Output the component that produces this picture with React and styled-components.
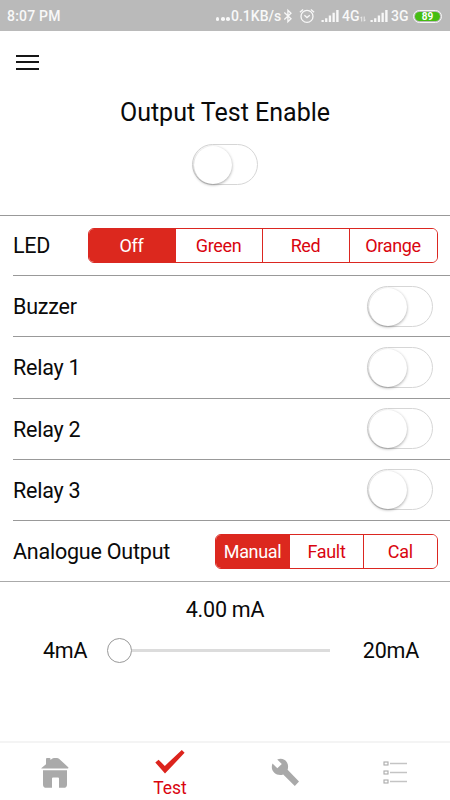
import { useState } from "react"
import styled, { createGlobalStyle } from "styled-components"

const RELAYS = ["Relay 1", "Relay 2", "Relay 3"]

export default function App(){
    const [enabled, setEnabled] = useState(false)
    const [led, setLed] = useState("Off")
    const [outputs, setOutputs] = useState({})
    const [mode, setMode] = useState("Manual")

    function toggleOutput(name){
        setOutputs({...outputs, [name]: !outputs[name]})
    }

    return(
        <>
            <GlobalStyle />
            <Screen>
                <StatusBar />
                <Header>
                    <MenuButton aria-label="Menu"><i /><i /><i /></MenuButton>
                </Header>
                <EnableArea>
                    <Title>Output Test Enable</Title>
                    <Toggle on={enabled} onClick={() => setEnabled(!enabled)} />
                </EnableArea>
                <Rows>
                    <Row $height="60px">
                        <Label>LED</Label>
                        <Segments options={["Off", "Green", "Red", "Orange"]} columns="86px 87px 87px 1fr" width="350px" value={led} onChange={setLed} />
                    </Row>
                    {["Buzzer", ...RELAYS].map((name) => (
                        <Row key={name} $height="61.25px" $toggle>
                            <Label $drop>{name}</Label>
                            <Toggle on={outputs[name]} onClick={() => toggleOutput(name)} />
                        </Row>
                    ))}
                    <Row $height="60px" $last>
                        <Label $drop>Analogue Output</Label>
                        <Segments options={["Manual", "Fault", "Cal"]} columns="73px 74px 1fr" width="222.5px" value={mode} onChange={setMode} />
                    </Row>
                </Rows>
                <Reading>4.00 mA</Reading>
                <SliderRow>
                    <Label>4mA</Label>
                    <Slider><Thumb /><Track /></Slider>
                    <Label>20mA</Label>
                </SliderRow>
                <TabBar>
                    <Tab aria-label="Home"><HomeIcon /></Tab>
                    <Tab $active><TickIcon />Test</Tab>
                    <Tab aria-label="Settings"><WrenchIcon /></Tab>
                    <Tab aria-label="List"><ListIcon /></Tab>
                </TabBar>
            </Screen>
        </>
    )
}

function StatusBar(){
    return(
        <Status>
            <Clock>8:07 PM</Clock>
            <Dots><i /><i /><i /></Dots>
            <Speed>0.1KB/s</Speed>
            <BluetoothIcon />
            <AlarmIcon />
            <SignalIcon />
            <Network>4G</Network>
            <DataIcon />
            <SignalIcon $near />
            <Network>3G</Network>
            <Battery><span>89</span></Battery>
        </Status>
    )
}

function Toggle({ on, onClick }){
    return(
        <Switch role="switch" aria-checked={!!on} $on={on} onClick={onClick}>
            <Knob $on={on} />
        </Switch>
    )
}

function Segments({ options, columns, width, value, onChange }){
    return(
        <SegmentGroup $columns={columns} $width={width}>
            {options.map((option) => (
                <Segment key={option} $active={option === value} onClick={() => onChange(option)}>
                    {option}
                </Segment>
            ))}
        </SegmentGroup>
    )
}

function BluetoothIcon(){
    return(
        <StatusIcon $left="3px" width="10" height="16" viewBox="0 0 10 16" fill="none" stroke="#f8f8f8" strokeWidth="1.3">
            <path d="M1.3 4.6 8 10.8 4.9 13.8V2.2L8 5.2 1.3 11.4" />
        </StatusIcon>
    )
}

function AlarmIcon(){
    return(
        <StatusIcon $left="6px" width="16" height="16" viewBox="0 0 16 16" fill="none" stroke="#f8f8f8" strokeWidth="1.3">
            <circle cx="8" cy="8.4" r="6" />
            <path d="M5.4 7.3 8 9.6 10.8 7.3M.9 4.3 4.1 1.5M15.1 4.3 11.9 1.5" />
        </StatusIcon>
    )
}

function SignalIcon({ $near }){
    return(
        <StatusIcon $left={$near ? "4px" : "6px"} width="18" height="14" viewBox="0 0 18 14" fill="#f8f8f8">
            <path d="M.5 11h2.3v2H.5zM4.1 9.3h2.3V13H4.1zM7.8 6.6h2.3V13H7.8zM11.5 3.8h2.3V13h-2.3zM15.2 1h2.4v12h-2.4z" />
        </StatusIcon>
    )
}

function DataIcon(){
    return(
        <StatusIcon $left="0" $top="6px" width="6" height="6" viewBox="0 0 6 6" fill="none" stroke="#f0f0f0" strokeWidth=".9">
            <path d="M1.7 5.5V.8L.3 2.3M4.2.5v4.7l1.4-1.5" />
        </StatusIcon>
    )
}

function HomeIcon(){
    return(
        <svg width="28" height="31" viewBox="0 0 28 31" fill="#aaa">
            <path d="M.2 11.2 5 7.2V2q0-1 1-1h2.5q1 0 1 1v1L11 1.7q1-.8 2-.8h3q1 0 2 .8l9.5 8.8-.4.9H.7z" />
            <path d="M2 13.2h24v14.2q0 3.4-3.4 3.4H18v-9.2q0-1-1-1h-5q-1 0-1 1v9.2H5.4Q2 30.8 2 27.4z" />
        </svg>
    )
}

function TickIcon(){
    return(
        <svg width="30" height="24" viewBox="0 0 30 24" fill="#dc241d">
            <path d="m.3 12.4 3.3-2.7 6.2 6.2L26.8.1l2.8 2.7L10 23.6z" />
        </svg>
    )
}

function WrenchIcon(){
    return(
        <svg width="29" height="29" viewBox="0 0 29 29" fill="#a9a9a9">
            <path d="M6.2 1.5C10-.2 14 1 16 4.4c1.4 2.4 1.3 5 .6 7.4L28 23.6 23.8 28 12.2 16.4C6.7 18.3.8 14.6.8 8.9c0-1.2.2-2.2.7-3.4l4.8 4.7L10.8 6z" />
        </svg>
    )
}

function ListIcon(){
    return(
        <svg width="25" height="24" viewBox="0 0 25 24" fill="none">
            {[3.5, 12.5, 21.5].map((y) => (
                <g key={y}>
                    <rect x="1" y={y - 1.5} width="4" height="3" stroke="#aaa" strokeWidth="1.1" />
                    <path d={`M7 ${y}H24`} stroke="#c4c4c4" strokeWidth="1.5" />
                </g>
            ))}
        </svg>
    )
}


const GlobalStyle = createGlobalStyle`
    *{
        box-sizing: border-box;
    }

    body{
        margin: 0;
        background-color: #FFFFFF;
        font-family: Roboto, sans-serif;
    }

    button{
        margin: 0;
        padding: 0;
        border: 0;
        background: none;
        color: inherit;
        font-family: inherit;
    }

    svg{
        display: block;
        flex-shrink: 0;
    }
`

const Screen = styled.div`
    display: flex;
    flex-direction: column;
    width: 450px;
    height: 800px;
    overflow: hidden;
    background-color: #FFFFFF;
    color: #0a0a0a;
`

const Status = styled.div`
    display: flex;
    align-items: center;
    flex-shrink: 0;
    height: 31px;
    padding: 1px 8px 0 7px;
    background-color: #bababa;
    color: #f8f8f8;
    font-size: 14px;
    font-weight: 500;
    white-space: nowrap;
`

const StatusIcon = styled.svg`
    margin-top: ${(props) => props.$top || "0"};
    margin-left: ${(props) => props.$left};
`

const Clock = styled.span`
    margin-right: auto;
    letter-spacing: 0.2px;
`

const Dots = styled.span`
    display: flex;
    gap: 1.8px;
    padding-top: 6px;
    margin-right: 1px;

    i{
        width: 3.6px;
        height: 3.6px;
        border-radius: 50%;
        background-color: #f8f8f8;
    }
`

const Speed = styled.span`
    width: 49px;
`

const Network = styled.span`
    width: 18px;
    margin-left: 3px;
`

const Battery = styled.span`
    display: flex;
    width: 29px;
    height: 13px;
    margin-left: 4px;
    padding: 1px;
    border: 1.5px solid #f8f8f8;
    border-radius: 7px;

    span{
        width: 100%;
        border-radius: 5px;
        background-color: #45bd12;
        color: #FFFFFF;
        font-size: 10px;
        font-weight: 700;
        line-height: 9px;
        text-align: center;
    }
`

const Header = styled.header`
    display: flex;
    align-items: center;
    flex-shrink: 0;
    height: 62px;
    padding-left: 16px;
`

const MenuButton = styled.button`
    display: flex;
    flex-direction: column;
    gap: 4.5px;
    width: 23px;

    i{
        height: 2px;
        background-color: #161616;
    }
`

const EnableArea = styled.section`
    display: flex;
    flex-direction: column;
    align-items: center;
    flex-shrink: 0;
    height: 122px;
`

const Title = styled.h1`
    margin: 5px 0 16px;
    font-size: 25px;
    font-weight: 400;
    line-height: 30px;
`

const Switch = styled.button`
    display: flex;
    width: 66px;
    height: 41px;
    padding: 1px;
    border: 1px solid #d6d6d6;
    border-radius: 21px;
    background-color: ${(props) => props.$on ? "#dc281e" : "#FFFFFF"};
`

const Knob = styled.span`
    width: 38px;
    height: 38px;
    margin-left: ${(props) => props.$on ? "24px" : "0"};
    border-radius: 50%;
    background-color: #FFFFFF;
    box-shadow: 0 1px 3px rgba(0, 0, 0, 0.36);
`

const Rows = styled.section`
    display: flex;
    flex-direction: column;
    flex-shrink: 0;
    border-top: 1px solid #999;
    border-bottom: 1px solid #aaa;
    padding-left: 13px;
`

const Row = styled.div`
    display: flex;
    align-items: center;
    justify-content: space-between;
    height: ${(props) => props.$height};
    padding-right: ${(props) => props.$toggle ? "17px" : "12.5px"};
    border-bottom: ${(props) => props.$last ? "0" : "1px solid #999"};
`

const Label = styled.span`
    padding-top: ${(props) => props.$drop ? "2px" : "0"};
    font-size: 21.5px;
    letter-spacing: -0.22px;
    line-height: 26px;
    white-space: nowrap;
`

const SegmentGroup = styled.div`
    display: grid;
    grid-template-columns: ${(props) => props.$columns};
    width: ${(props) => props.$width};
    height: 35px;
    border: 1px solid #db2721;
    border-radius: 6px;
    overflow: hidden;
`

const Segment = styled.button`
    border-left: 1px solid #db2721;
    background-color: ${(props) => props.$active ? "#dc281e" : "#FFFFFF"};
    color: ${(props) => props.$active ? "#FFFFFF" : "#d9050f"};
    font-size: 18px;
    letter-spacing: -0.35px;

    &:first-child{
        border-left: 0;
    }
`

const Reading = styled.div`
    flex-shrink: 0;
    padding-top: 15px;
    font-size: 21.5px;
    letter-spacing: -0.22px;
    line-height: 26px;
    text-align: center;
`

const SliderRow = styled.div`
    display: flex;
    align-items: center;
    justify-content: space-between;
    flex-shrink: 0;
    height: 26px;
    margin-top: 15px;
    padding: 0 31px 0 43px;
`

const Slider = styled.div`
    display: flex;
    align-items: center;
    width: 223px;
    margin-right: 13px;
    padding-bottom: 1px;
`

const Thumb = styled.span`
    width: 25px;
    height: 25px;
    border: 1px solid #999;
    border-radius: 50%;
`

const Track = styled.span`
    flex: 1;
    height: 3px;
    background-color: #dcdcdc;
`

const TabBar = styled.nav`
    display: grid;
    grid-template-columns: 110px 120px 110px 110px;
    flex-shrink: 0;
    height: 59px;
    margin-top: auto;
    border-top: 2px solid #f4f4f4;
`

const Tab = styled.button`
    display: flex;
    flex-direction: column;
    align-items: center;
    justify-content: ${(props) => props.$active ? "flex-start" : "center"};
    gap: 4px;
    padding-top: ${(props) => props.$active ? "7px" : "1px"};
    color: #d9050f;
    font-size: 17.5px;
    line-height: 21px;
`
